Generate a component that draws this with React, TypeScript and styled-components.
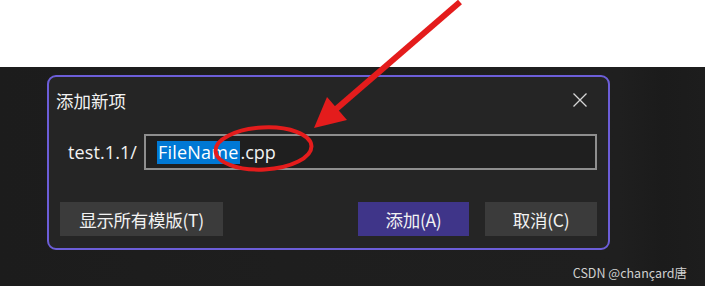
import styled, { createGlobalStyle } from 'styled-components';

const GlobalStyle = createGlobalStyle`
  html, body {
    margin: 0;
    padding: 0;
    background: #ffffff;
  }
  body {
    font-family: "Open Sans", "Noto Sans CJK SC", sans-serif;
  }
`;

const Page = styled.div`
  position: relative;
  width: 705px;
  height: 286px;
  overflow: hidden;
  display: flex;
  flex-direction: column;
`;

const WhiteBand = styled.div`
  height: 67px;
  background: #ffffff;
`;

const DarkArea = styled.div`
  flex: 1;
  display: flex;
  flex-direction: column;
  padding: 8px 0 0 47px;
  background: linear-gradient(90deg, #1c1c1c 0%, #1e1e1e 40%, #1f1f1f 88%, #1b1b1b 94%, #1d1d1d 100%);
`;

const Dialog = styled.div`
  box-sizing: border-box;
  width: 563px;
  height: 175px;
  border: 2px solid #6c5ed8;
  border-radius: 9px;
  background: #252525;
  display: flex;
  flex-direction: column;
  padding: 0 11px 12px 11px;
`;

const Header = styled.div`
  height: 44px;
  display: flex;
  align-items: center;
  justify-content: space-between;
  padding: 2px 10px 0 0;
  margin-left: -4px;
`;

const Title = styled.span`
  font-family: "Noto Sans CJK SC", sans-serif;
  font-size: 17.5px;
  color: #f2f2f2;
`;

const CloseButton = styled.button`
  width: 14px;
  height: 14px;
  padding: 0;
  border: none;
  background: none;
  display: flex;
  color: #d6d6d6;
`;

const PathRow = styled.div`
  margin-top: 13px;
  height: 36px;
  display: flex;
  align-items: center;
  gap: 7px;
  padding-left: 8px;
`;

const PathLabel = styled.span`
  font-size: 18px;
  color: #f2f2f2;
  letter-spacing: 0.1px;
`;

const NameBox = styled.div`
  box-sizing: border-box;
  flex: 1;
  height: 36px;
  border: 2px solid #8e8e8e;
  background: #1f1f1f;
  display: flex;
  align-items: center;
  padding-left: 11px;
  font-size: 18px;
  color: #f2f2f2;
`;

const Selected = styled.span`
  background: #0078d4;
  color: #ffffff;
  line-height: 23px;
  padding: 0 2px 0 1px;
  letter-spacing: 0.2px;
`;

const Footer = styled.div`
  margin-top: 32px;
  display: flex;
  gap: 16px;
`;

const Button = styled.button<{ $primary?: boolean; $width: number }>`
  height: 34px;
  width: ${p => p.$width}px;
  border: none;
  border-radius: 0;
  background: ${p => (p.$primary ? '#3f3589' : '#3b3b3b')};
  color: #f2f2f2;
  font-family: "Noto Sans CJK SC", sans-serif;
  font-size: 17.5px;
  letter-spacing: -0.3px;
  padding: 0;
`;

const Spacer = styled.div`
  flex: 1;
`;

const Watermark = styled.div`
  align-self: flex-end;
  margin-top: 13px;
  margin-right: 18px;
  font-family: "Noto Sans CJK SC", sans-serif;
  font-size: 12.5px;
  color: #d0d0d0;
`;

const Annotation = styled.svg`
  position: absolute;
  left: 0;
  top: 0;
  pointer-events: none;
`;

const App = () => (
  <>
    <GlobalStyle />
    <Page>
      <WhiteBand />
      <DarkArea>
        <Dialog>
          <Header>
            <Title>添加新项</Title>
            <CloseButton aria-label="close">
              <svg width="14" height="14" viewBox="0 0 14 14">
                <path d="M0.5 0.5L13.5 13.5M13.5 0.5L0.5 13.5" stroke="currentColor" strokeWidth="1.3" />
              </svg>
            </CloseButton>
          </Header>
          <PathRow>
            <PathLabel>test.1.1/</PathLabel>
            <NameBox>
              <Selected>FileName</Selected>.cpp
            </NameBox>
          </PathRow>
          <Footer>
            <Button $width={163}>显示所有模版(T)</Button>
            <Spacer />
            <Button $primary $width={111}>添加(A)</Button>
            <Button $width={112}>取消(C)</Button>
          </Footer>
        </Dialog>
        <Watermark>CSDN @chançard唐</Watermark>
      </DarkArea>
      <Annotation width="705" height="286" viewBox="0 0 705 286">
        <line x1="460" y1="2" x2="335" y2="110" stroke="#e41c1c" strokeWidth="6" />
        <polygon points="314,128 327,97 347,120" fill="#e41c1c" />
        <ellipse cx="263.5" cy="148.5" rx="48" ry="21" fill="none" stroke="#e41c1c" strokeWidth="4" transform="rotate(-3 263.5 148.5)" />
      </Annotation>
    </Page>
  </>
);

export default App;
